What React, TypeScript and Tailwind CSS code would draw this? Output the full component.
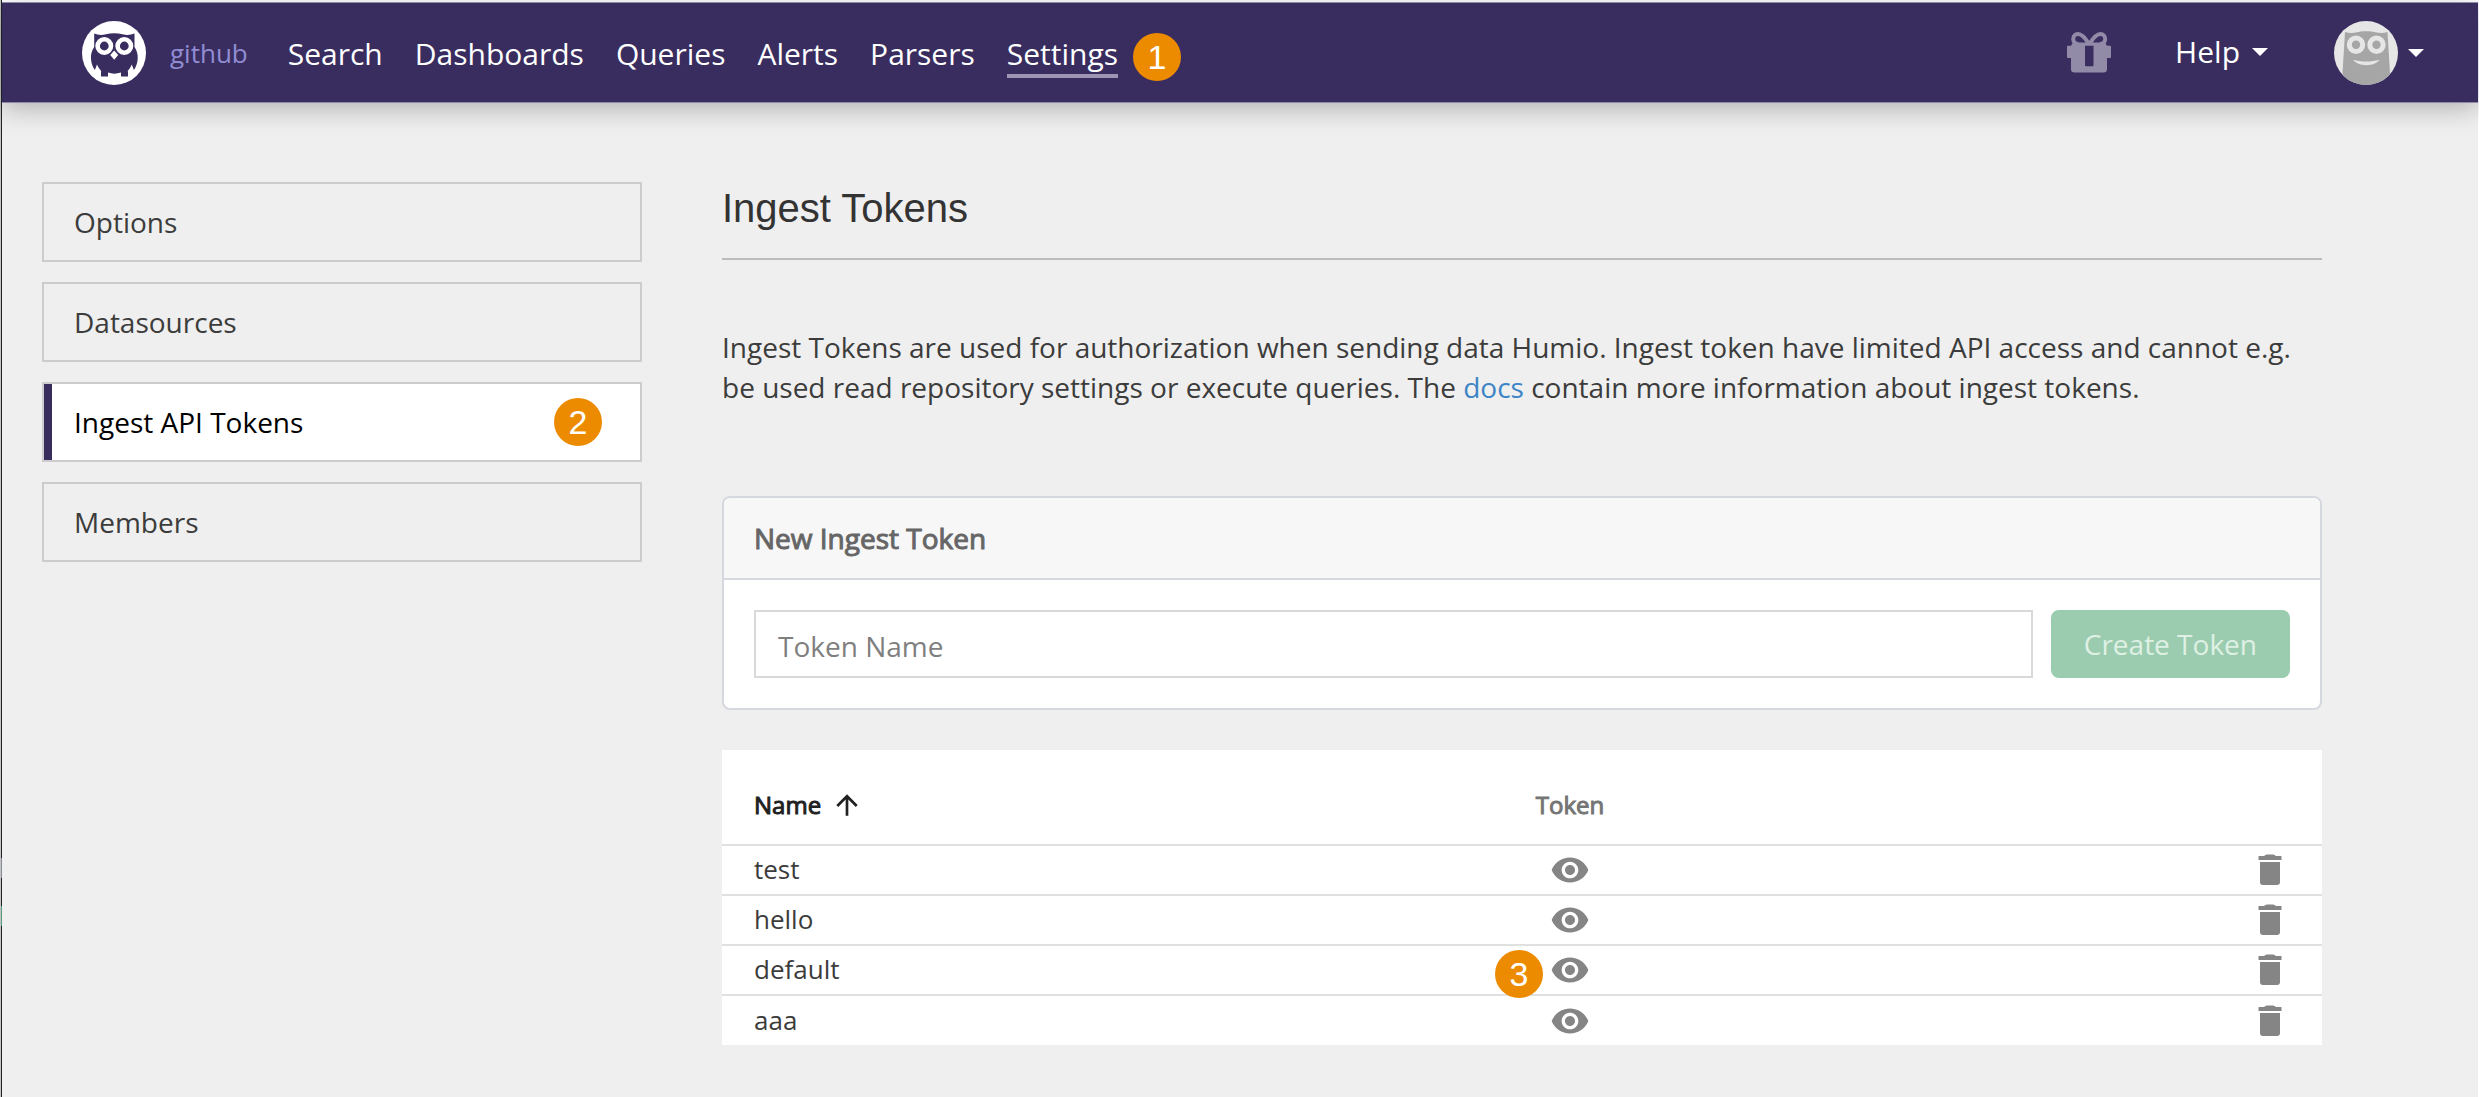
import React, { useState } from "react";

const navItems = ["Search", "Dashboards", "Queries", "Alerts", "Parsers", "Settings"];
const sections = ["Options", "Datasources", "Ingest API Tokens", "Members"];
const tokens = ["test", "hello", "default", "aaa"];

function Step({ n, className = "" }: { n: number; className?: string }) {
  return (
    <span
      className={
        "flex size-12 shrink-0 items-center justify-center rounded-full bg-[#ed8b00] font-['Liberation_Sans',sans-serif] text-[34px] leading-none text-white " +
        className
      }
    >
      {n}
    </span>
  );
}

function OwlLogo() {
  return (
    <svg className="size-16" viewBox="0 0 64 64" aria-hidden="true">
      <circle cx="32" cy="32" r="32" fill="#fff" />
      <path
        fill="#392d60"
        d="M12.2 12.6C16 14.2 20 14.4 24 13.2C29 11.9 35.500 11.900 40.500 13.200C44.500 14.400 48.500 14.200 52.500 12.600V26C55 29.500 56 33.500 55.700 38C55.300 42.500 54 46 51.900 49L49.800 43.500C48.800 46 47.300 48.200 45.300 50.300H46V55.500H39V51.600C34.500 53 30 53 26 51.600V55.500H19V50.300H19.500C17.500 48.200 16 46 15 43.500L12.900 49C10.700 46 9.300 42.500 9 38C8.700 33.500 9.700 29.500 12.200 26Z"
      />
      <circle cx="22.300" cy="25" r="6.700" fill="none" stroke="#fff" strokeWidth="4.600" />
      <circle cx="42.300" cy="25" r="6.700" fill="none" stroke="#fff" strokeWidth="4.600" />
      <path d="M32.200 29.500L36.200 34L32.200 38.800L28.200 34Z" fill="#fff" />
    </svg>
  );
}

function Avatar() {
  return (
    <svg className="size-16" viewBox="0 0 64 64" aria-hidden="true">
      <defs>
        <clipPath id="avatar-clip">
          <circle cx="32" cy="32" r="32" />
        </clipPath>
      </defs>
      <g clipPath="url(#avatar-clip)">
        <rect width="64" height="64" fill="#e6e6e6" />
        <path
          fill="#a6a6a6"
          d="M11 11C15 12.400 19 12.300 23 11.300C26 9.800 38 9.800 41.500 11.300C45.500 12.300 49.500 12.400 53.500 11L56 52V64H8.500V52Z"
        />
        <circle cx="22" cy="23.700" r="6.700" fill="none" stroke="#e6e6e6" strokeWidth="5" />
        <circle cx="42.500" cy="23.700" r="6.700" fill="none" stroke="#e6e6e6" strokeWidth="5" />
        <path d="M19 38.800C27 41.200 37 41.200 45.500 38.800C41 46 24 46 19 38.800Z" fill="#e6e6e6" />
      </g>
    </svg>
  );
}

function GiftIcon() {
  return (
    <svg className="h-[41px] w-11" viewBox="0 0 44 41" aria-hidden="true">
      <path
        fill="#928ba8"
        fillRule="evenodd"
        d="M6 10.500H38L40 13.700H43Q44 13.700 44 14.700V25Q44 26 43 26H40V37Q40 40.500 36.500 40.500H7.500Q4 40.500 4 37V26H1Q0 26 0 25V14.700Q0 13.700 1 13.700H4ZM18 13.700V33.300Q18 34.300 19 34.300H25.500Q26.500 34.300 26.500 33.300V13.700Z"
      />
      <path
        fill="none"
        stroke="#928ba8"
        strokeWidth="4"
        d="M22 12C18 5.500 14.500 2 11 2C8 2 6.200 4.300 6.200 7C6.200 9.800 8.500 12 11.500 12M22.400 12C26.400 5.500 29.900 2 33.400 2C36.400 2 38.200 4.300 38.200 7C38.200 9.800 35.900 12 32.900 12"
      />
    </svg>
  );
}

function Caret() {
  return (
    <svg className="h-2 w-4" viewBox="0 0 16 8" aria-hidden="true">
      <path d="M0 0H16L8 8Z" fill="#fff" />
    </svg>
  );
}

function EyeIcon() {
  return (
    <svg className="size-10" viewBox="0 0 24 24" fill="#858585" aria-hidden="true">
      <path d="M12 4.500C7 4.500 2.730 7.610 1 12c1.730 4.390 6 7.500 11 7.500s9.270-3.110 11-7.500c-1.730-4.390-6-7.500-11-7.500zM12 17c-2.760 0-5-2.240-5-5s2.240-5 5-5 5 2.240 5 5-2.240 5-5 5zm0-8c-1.660 0-3 1.340-3 3s1.340 3 3 3 3-1.340 3-3-1.340-3-3-3z" />
    </svg>
  );
}

function TrashIcon() {
  return (
    <svg className="size-10" viewBox="0 0 40 40" fill="#858585" aria-hidden="true">
      <path d="M10 12H30V32Q30 35 27 35H13Q10 35 10 32ZM8.500 6.500Q8.500 6 9 6H14Q15.500 4.500 17 4.500H23Q24.500 4.500 26 6H31Q31.500 6 31.500 6.500V10H8.500Z" />
    </svg>
  );
}

function ArrowUpIcon() {
  return (
    <svg className="size-8" viewBox="0 0 24 24" fill="#212121" aria-hidden="true">
      <path d="M4 12l1.410 1.410L11 7.830V20h2V7.830l5.580 5.590L20 12l-8-8-8 8z" />
    </svg>
  );
}

export default function App() {
  const [name, setName] = useState("");

  return (
    <div className="flex min-h-screen bg-[#efefef] font-['Open_Sans',sans-serif] text-[28px] leading-10 text-[#3c3c3c]">
      <div className="flex w-0.5 shrink-0 flex-col border-l border-[#c4c4c6] bg-[#222327]">
        <div className="mt-[858px] h-5 bg-[#868b98]" />
        <div className="mt-7 h-5 bg-[#4f9d78]" />
      </div>

      <div className="min-w-0 flex-1 border-r border-t-2 border-white">
        <header className="flex h-[101px] items-center border-y border-[#8f8aa6] bg-[#392d60] pl-20 pr-[54px] shadow-[0_6px_24px_rgba(0,0,0,0.25)]">
          <a href="#home" aria-label="Home">
            <OwlLogo />
          </a>
          <a href="#github" className="ml-6 text-[26px] text-[#918dd3]">
            github
          </a>
          <nav className="ml-10 flex items-center gap-8 pt-0.5 text-[30px] text-white">
            {navItems.map((item) => (
              <a
                key={item}
                href={"#" + item.toLowerCase()}
                className={
                  item === "Settings"
                    ? "border-y-4 border-t-transparent border-b-[#9c95b4]"
                    : "border-y-4 border-transparent"
                }
              >
                {item}
              </a>
            ))}
          </nav>
          <Step n={1} className="ml-[15px] mt-2" />

          <div className="ml-auto flex items-center text-[30px] text-white">
            <button type="button" aria-label="What's new">
              <GiftIcon />
            </button>
            <button type="button" className="ml-16 flex items-center gap-3 pb-0.5">
              Help
              <Caret />
            </button>
            <button type="button" aria-label="Account" className="ml-[66px] flex items-center gap-2.5">
              <Avatar />
              <Caret />
            </button>
          </div>
        </header>

        <div className="flex items-start gap-20 pl-10 pr-[156px] pt-[79px]">
          <nav className="flex w-[600px] shrink-0 flex-col gap-5">
            {sections.map((s) =>
              s === "Ingest API Tokens" ? (
                <a
                  key={s}
                  href="#tokens"
                  className="flex h-20 items-center border-2 border-[#cccccc] bg-white pr-[38px] text-black"
                >
                  <span className="h-full w-2 bg-[#392d60]" />
                  <span className="ml-[22px]">{s}</span>
                  <Step n={2} className="ml-auto" />
                </a>
              ) : (
                <a
                  key={s}
                  href={"#" + s.toLowerCase()}
                  className="flex h-20 items-center border-2 border-[#cccccc] px-[30px]"
                >
                  {s}
                </a>
              )
            )}
          </nav>

          <main className="min-w-0 flex-1">
            <h1 className="border-b-2 border-[#bcbcbc] pb-6 font-['Liberation_Sans',sans-serif] text-[40px] leading-[52px] text-[#333333]">
              Ingest Tokens
            </h1>
            <p className="mt-[67px]">
              Ingest Tokens are used for authorization when sending data Humio. Ingest token have
              limited API access and cannot e.g. be used read repository settings or execute
              queries. The{" "}
              <a href="#docs" className="text-[#3d85c6]">
                docs
              </a>{" "}
              contain more information about ingest tokens.
            </p>

            <section className="mt-[89px] overflow-hidden rounded-lg border-2 border-[#d6d8e0] bg-white">
              <h2 className="border-b-2 border-[#d6d8e0] bg-[#f7f7f7] px-[30px] py-5 text-[#666666] [-webkit-text-stroke:1px_#666666]">
                New Ingest Token
              </h2>
              <form
                className="flex gap-[18px] px-[30px] py-[30px]"
                onSubmit={(e) => e.preventDefault()}
              >
                <input
                  type="text"
                  aria-label="Token Name"
                  placeholder="Token Name"
                  value={name}
                  onChange={(e) => setName(e.target.value)}
                  className="h-[68px] min-w-0 flex-1 border-2 border-[#d9d9d9] bg-white px-[22px] pt-1 outline-none placeholder:text-[#7f7f7f]"
                />
                <button
                  type="submit"
                  className="h-[68px] shrink-0 rounded-lg bg-[#9bccaf] px-[33px] text-[#dff0e4]"
                >
                  Create Token
                </button>
              </form>
            </section>

            <table className="mt-10 w-full table-fixed border-collapse bg-white">
              <thead>
                <tr className="text-2xl leading-[38px]">
                  <th className="w-1/2 pb-5 pl-8 pt-9 text-left font-normal text-[#212121]">
                    <button
                      type="button"
                      className="flex h-[38px] items-center gap-2.5 [-webkit-text-stroke:1px_#212121]"
                    >
                      Name
                      <ArrowUpIcon />
                    </button>
                  </th>
                  <th className="w-[6%] pb-5 pt-9 text-center font-normal text-[#757575] [-webkit-text-stroke:1px_#757575]">
                    Token
                  </th>
                  <th className="pb-5 pt-9" aria-label="Actions" />
                </tr>
              </thead>
              <tbody>
                {tokens.map((t) => (
                  <tr key={t} className="h-[50px] border-t-2 border-[#e0e0e0]">
                    <td className="pb-0.5 pl-8 text-[26px]">{t}</td>
                    <td>
                      <div className="relative mx-auto size-10">
                        <button type="button" aria-label={"Show token " + t} className="block">
                          <EyeIcon />
                        </button>
                        {t === "default" && (
                          <Step n={3} className="absolute right-full top-0 mr-[7px]" />
                        )}
                      </div>
                    </td>
                    <td className="pr-8">
                      <button
                        type="button"
                        aria-label={"Delete token " + t}
                        className="ml-auto block"
                      >
                        <TrashIcon />
                      </button>
                    </td>
                  </tr>
                ))}
              </tbody>
            </table>
          </main>
        </div>
      </div>
    </div>
  );
}
